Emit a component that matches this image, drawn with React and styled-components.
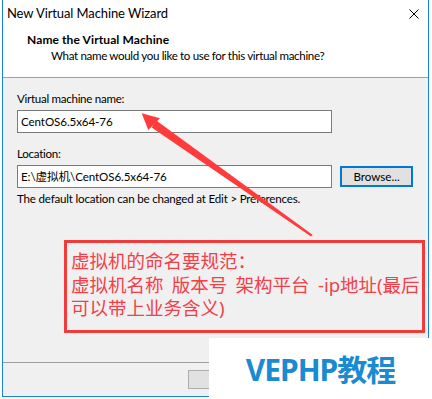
import React from "react";
import styled, { createGlobalStyle } from "styled-components";

const Global = createGlobalStyle`
  html, body { margin: 0; padding: 0; background: #ffffff; }
  body { font-family: "Segoe UI", Lato, "Noto Sans", "Noto Sans CJK SC", sans-serif; }
  * { box-sizing: border-box; }
`;

const Page = styled.div`
  position: relative;
  width: 432px;
  height: 399px;
  overflow: hidden;
  background: #ffffff;
  padding-left: 2px;
`;

const Window = styled.div`
  width: 427px;
  height: 397px;
  display: flex;
  flex-direction: column;
  border: 1px solid #1883d7;
  border-top: none;
  background: #f0f0f0;
  font-size: 11.6px;
  letter-spacing: -0.3px;
  color: #000;
`;

const TitleBar = styled.div`
  height: 26px;
  background: #fff;
  display: flex;
  align-items: center;
  justify-content: space-between;
  padding: 0 9px 0 4px;
  font-size: 13px;
  letter-spacing: -0.1px;
`;

const CloseIcon = styled.svg`
  width: 10px;
  height: 10px;
  margin-top: 1px;
`;

const Header = styled.div`
  height: 52px;
  background: #fff;
  border-bottom: 1px solid #a0a0a0;
  padding: 6px 0 0 24px;
  display: flex;
  flex-direction: column;
`;

const HeaderTitle = styled.div`
  font-weight: bold;
  font-size: 12px;
  letter-spacing: 0.1px;
  height: 16px;
  line-height: 16px;
`;

const HeaderSub = styled.div`
  padding-left: 24px;
  height: 16px;
  line-height: 16px;
  letter-spacing: -0.35px;
`;

const Body = styled.div`
  flex: 1;
  padding: 13px 0 0 14px;
  display: flex;
  flex-direction: column;
`;

const Label = styled.div`
  height: 16px;
  line-height: 16px;
  margin-bottom: 3px;
`;

const Row = styled.div`
  display: flex;
  align-items: center;
  gap: 8px;
  margin-bottom: ${(p) => p.$mb || 0}px;
`;

const Input = styled.div`
  width: 315px;
  height: 23px;
  background: #fff;
  border: 1px solid #7a7a7a;
  padding-left: 3px;
  line-height: 21px;
  letter-spacing: -0.1px;
`;

const Button = styled.div`
  width: ${(p) => p.$w || 73}px;
  height: ${(p) => p.$h || 21}px;
  background: #e1e1e1;
  border: ${(p) => (p.$focus ? "2px solid #0078d7" : "1px solid #adadad")};
  display: flex;
  align-items: center;
  justify-content: center;
  letter-spacing: 0;
`;

const Note = styled.div`
  margin-top: 3px;
  height: 16px;
  line-height: 16px;
  letter-spacing: -0.2px;
`;

const Callout = styled.div`
  margin: 33px 0 0 47px;
  width: 361px;
  height: 93px;
  border: 3px solid #f23a3a;
  padding: 6px 0 0 4px;
  color: #f2404a;
  font-family: "Microsoft YaHei", "Noto Sans", "Noto Sans CJK SC", sans-serif;
  font-size: 18.5px;
  line-height: 23.5px;
  letter-spacing: 0;
  word-spacing: 3.5px;
  white-space: nowrap;
`;

const Footer = styled.div`
  height: 34px;
  border-top: 1px solid #a0a0a0;
  display: flex;
  justify-content: flex-end;
  gap: 5px;
  padding: 7px 5px 0 0;
`;

const FootButton = styled(Button)`
  width: 75px;
  height: 19px;
  color: #000;
`;

const Overlay = styled.svg`
  position: absolute;
  left: 0;
  top: 0;
  width: 432px;
  height: 399px;
  pointer-events: none;
`;

const Watermark = styled.div`
  position: absolute;
  left: 209px;
  top: 338px;
  width: 223px;
  height: 61px;
  background: #fff;
  display: flex;
  align-items: center;
  justify-content: center;
  padding: 0 0 1px 0;
  color: #1a8ad2;
  font-family: "Noto Sans", "Noto Sans CJK SC", sans-serif;
  font-weight: bold;
  font-size: 30px;
  letter-spacing: -1px;
`;

export default function App() {
  return (
    <>
      <Global />
      <Page>
        <Window>
          <TitleBar>
            <span>New Virtual Machine Wizard</span>
            <CloseIcon viewBox="0 0 10 10">
              <path d="M0.5 0.5 L9.5 9.5 M9.5 0.5 L0.5 9.5" stroke="#000" strokeWidth="1" fill="none" />
            </CloseIcon>
          </TitleBar>
          <Header>
            <HeaderTitle>Name the Virtual Machine</HeaderTitle>
            <HeaderSub>What name would you like to use for this virtual machine?</HeaderSub>
          </Header>
          <Body>
            <Label>Virtual machine name:</Label>
            <Row $mb={13}>
              <Input>CentOS6.5x64-76</Input>
            </Row>
            <Label>Location:</Label>
            <Row>
              <Input>E:\虚拟机\CentOS6.5x64-76</Input>
              <Button $focus>Browse...</Button>
            </Row>
            <Note>The default location can be changed at Edit &gt; Preferences.</Note>
            <Callout>
              虚拟机的命名要规范：
              <br />
              虚拟机名称 版本号 架构平台 -ip地址(最后
              <br />
              可以带上业务含义)
            </Callout>
          </Body>
          <Footer>
            <FootButton>&lt; Back</FootButton>
            <FootButton />
            <FootButton />
          </Footer>
        </Window>
        <Overlay viewBox="0 0 432 399">
          <polygon points="141.7,113.3 160,118.3 148.3,130" fill="#ff3b3b" />
          <polygon points="156.3,120.6 151.7,127.4 311,236.5 312.5,234.8" fill="#ff3b3b" />
        </Overlay>
        <Watermark>VEPHP教程</Watermark>
      </Page>
    </>
  );
}
